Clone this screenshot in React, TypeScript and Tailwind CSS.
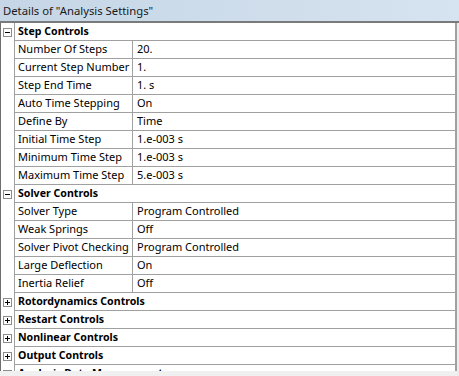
import React from "react";

type Row =
  | { kind: "section"; label: string; open: boolean }
  | { kind: "item"; name: string; value: string };

const rows: Row[] = [
  { kind: "section", label: "Step Controls", open: true },
  { kind: "item", name: "Number Of Steps", value: "20." },
  { kind: "item", name: "Current Step Number", value: "1." },
  { kind: "item", name: "Step End Time", value: "1. s" },
  { kind: "item", name: "Auto Time Stepping", value: "On" },
  { kind: "item", name: "Define By", value: "Time" },
  { kind: "item", name: "Initial Time Step", value: "1.e-003 s" },
  { kind: "item", name: "Minimum Time Step", value: "1.e-003 s" },
  { kind: "item", name: "Maximum Time Step", value: "5.e-003 s" },
  { kind: "section", label: "Solver Controls", open: true },
  { kind: "item", name: "Solver Type", value: "Program Controlled" },
  { kind: "item", name: "Weak Springs", value: "Off" },
  { kind: "item", name: "Solver Pivot Checking", value: "Program Controlled" },
  { kind: "item", name: "Large Deflection", value: "On" },
  { kind: "item", name: "Inertia Relief", value: "Off" },
  { kind: "section", label: "Rotordynamics Controls", open: false },
  { kind: "section", label: "Restart Controls", open: false },
  { kind: "section", label: "Nonlinear Controls", open: false },
  { kind: "section", label: "Output Controls", open: false },
  { kind: "section", label: "Analysis Data Management", open: false },
];

function Expander({ open }: { open: boolean }) {
  return (
    <svg width="9" height="9" viewBox="0 0 9 9" className="block">
      <rect x="0.5" y="0.5" width="8" height="8" fill="#ffffff" stroke="#8c8c8c" />
      <line x1="2" y1="4.5" x2="7" y2="4.5" stroke="#000" />
      {!open && <line x1="4.5" y1="2" x2="4.5" y2="7" stroke="#000" />}
    </svg>
  );
}

export default function App() {
  return (
    <div
      className="w-[459px] h-[376px] bg-[#f0f0f0] flex flex-col overflow-hidden text-black"
      style={{ fontFamily: '"Noto Sans", "Open Sans", sans-serif' }}
    >
      <div className="h-[23px] shrink-0 bg-gradient-to-r from-[#c6d6e6] to-[#d6e3f0] border-b-2 border-[#7a7a7a] flex items-center pl-[3px] text-[11.3px] leading-none text-[#1a1a1a]">
        Details of "Analysis Settings"
      </div>
      <div className="flex flex-1 min-h-0">
        <div className="w-[457px] h-[348px] bg-white border-l border-[#6e6e6e] border-r-2 border-r-[#a0a0a0] overflow-hidden flex flex-col">
          {rows.map((r, i) => (
            <div key={i} className="flex h-[18px] shrink-0">
              <div className="w-[14px] shrink-0 border-r border-[#a0a0a0] flex items-center justify-center">
                {r.kind === "section" ? <Expander open={r.open} /> : null}
              </div>
              {r.kind === "section" ? (
                <div className="flex-1 border-b border-[#a0a0a0] flex items-center pl-[3px] text-[10.6px] font-bold whitespace-nowrap">
                  {r.label}
                </div>
              ) : (
                <div className="flex-1 border-b border-[#a0a0a0] flex text-[11px] whitespace-nowrap">
                  <div className="w-[118px] shrink-0 border-r border-[#a0a0a0] flex items-center pl-[3px]">
                    {r.name}
                  </div>
                  <div className="flex-1 flex items-center pl-[4px]">{r.value}</div>
                </div>
              )}
            </div>
          ))}
        </div>
        <div className="w-[2px] bg-[#ececec]" />
      </div>
    </div>
  );
}
